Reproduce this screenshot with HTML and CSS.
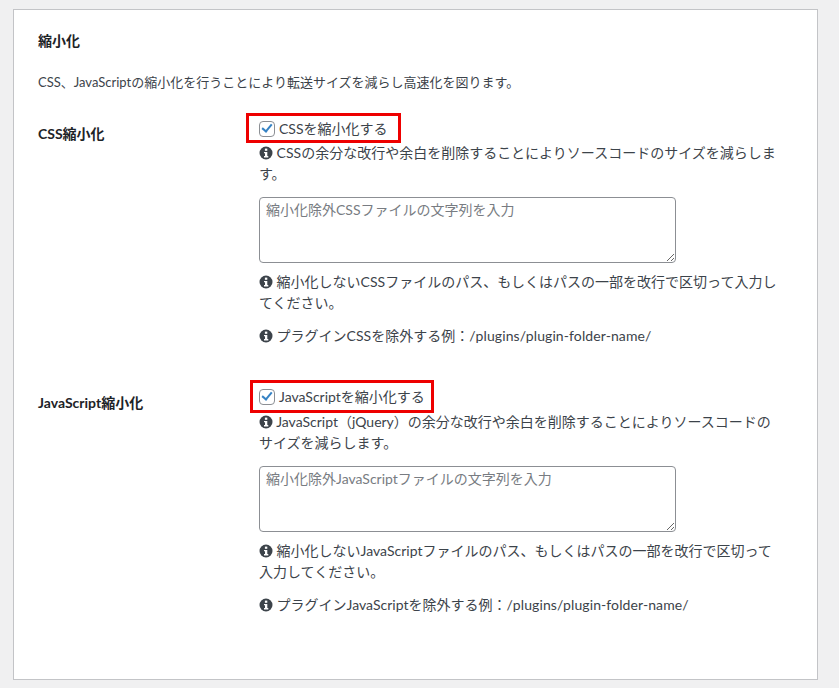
FILE: index.html
```html
<!DOCTYPE html>
<html lang="ja">
<head>
<meta charset="utf-8">
<title>縮小化</title>
<link rel="stylesheet" href="styles.css">
</head>
<body>
<svg class="defs" width="0" height="0" aria-hidden="true"><symbol id="info" viewBox="0 0 14 14"><circle cx="7" cy="7" r="6.5" fill="#3c434a"/><rect x="5.9" y="2.6" width="2.4" height="2.2" fill="#fff"/><path d="M5 6h3.3v4.1h1v1.3H5v-1.3h1V7.3H5z" fill="#fff"/></symbol></svg>
<main class="panel">
  <h2 class="title">縮小化</h2>
  <p class="lead">CSS、JavaScriptの縮小化を行うことにより転送サイズを減らし高速化を図ります。</p>

  <section class="row row-css">
    <h3 class="label">CSS縮小化</h3>
    <div class="field">
      <label class="check check-css"><input type="checkbox" checked><span>CSSを縮小化する</span></label>
      <p class="tip"><svg class="i"><use href="#info"/></svg> CSSの余分な改行や余白を削除することによりソースコードのサイズを減らします。</p>
      <textarea class="box" placeholder="縮小化除外CSSファイルの文字列を入力"></textarea>
      <p class="tip"><svg class="i"><use href="#info"/></svg> 縮小化しないCSSファイルのパス、もしくはパスの一部を改行で区切って入力してください。</p>
      <p class="tip gap"><svg class="i"><use href="#info"/></svg> プラグインCSSを除外する例：<span class="path">/plugins/plugin-folder-name/</span></p>
    </div>
  </section>

  <section class="row">
    <h3 class="label">JavaScript縮小化</h3>
    <div class="field">
      <label class="check check-js"><input type="checkbox" checked><span>JavaScriptを縮小化する</span></label>
      <p class="tip"><svg class="i"><use href="#info"/></svg> JavaScript（jQuery）の余分な改行や余白を削除することによりソースコードのサイズを減らします。</p>
      <textarea class="box" placeholder="縮小化除外JavaScriptファイルの文字列を入力"></textarea>
      <p class="tip"><svg class="i"><use href="#info"/></svg> 縮小化しないJavaScriptファイルのパス、もしくはパスの一部を改行で区切って入力してください。</p>
      <p class="tip gap"><svg class="i"><use href="#info"/></svg> プラグインJavaScriptを除外する例：<span class="path">/plugins/plugin-folder-name/</span></p>
    </div>
  </section>
</main>
</body>
</html>
```
FILE: styles.css
```css
html, body { margin: 0; height: 100%; }
body {
  background: #f0f0f1;
  color: #3c434a;
  font: 14px/21px "Lato", "Noto Sans CJK JP", sans-serif;
  overflow: hidden;
  padding: 9px 21px 0 13px;
  box-sizing: border-box;
}
.defs { position: absolute; }
.panel {
  box-sizing: border-box;
  height: 671px;
  background: #fff;
  border: 1px solid #c3c4c7;
  padding: 20px 24px 0;
}
.title { margin: 0; font-size: 14px; line-height: 21px; font-weight: 700; color: #1d2327; }
.lead { margin: 21px 0 0; font-size: 13px; line-height: 21px; }
.row { display: grid; grid-template-columns: 221px 1fr; }
.row-css { margin-top: 22px; height: 269px; }
.label { margin: 8px 0 0; font-size: 14px; line-height: 21px; font-weight: 700; color: #1d2327; }
.field { min-width: 0; width: 523px; }
.check {
  display: flex;
  box-sizing: border-box;
  width: max-content;
  align-items: center;
  gap: 4px;
  outline: 3px solid #ee0000;
}
.check-css {
  height: 24px;
  padding: 2px 10px 1px 10px;
  margin: 1px 0 2px -10px;
}
.check-js {
  height: 27px;
  padding: 3px 6px 3px 6px;
  margin: -1px 0 1px -6px;
}
.check input {
  appearance: none;
  width: 16px;
  height: 16px;
  margin: 0;
  border: 1px solid #8c8f94;
  border-radius: 4px;
  background: #fff;
  position: relative;
}
.check input::after {
  content: "";
  position: absolute;
  left: 4px;
  top: 0;
  width: 4px;
  height: 8px;
  border: solid #3582c4;
  border-width: 0 2.5px 2.5px 0;
  transform: rotate(40deg);
}
.tip { margin: 0; }
.gap { margin-top: 12px; }
.path { letter-spacing: 0.1px; }
.i { width: 14px; height: 14px; vertical-align: -2px; }
.box {
  display: block;
  box-sizing: border-box;
  width: 417px;
  height: 66px;
  margin: 13px 0 8px;
  padding: 1px 6px;
  border: 1px solid #8c8f94;
  border-radius: 4px;
  font: inherit;
  color: #3c434a;
}
.box::placeholder { color: #787c82; opacity: 1; }
```
